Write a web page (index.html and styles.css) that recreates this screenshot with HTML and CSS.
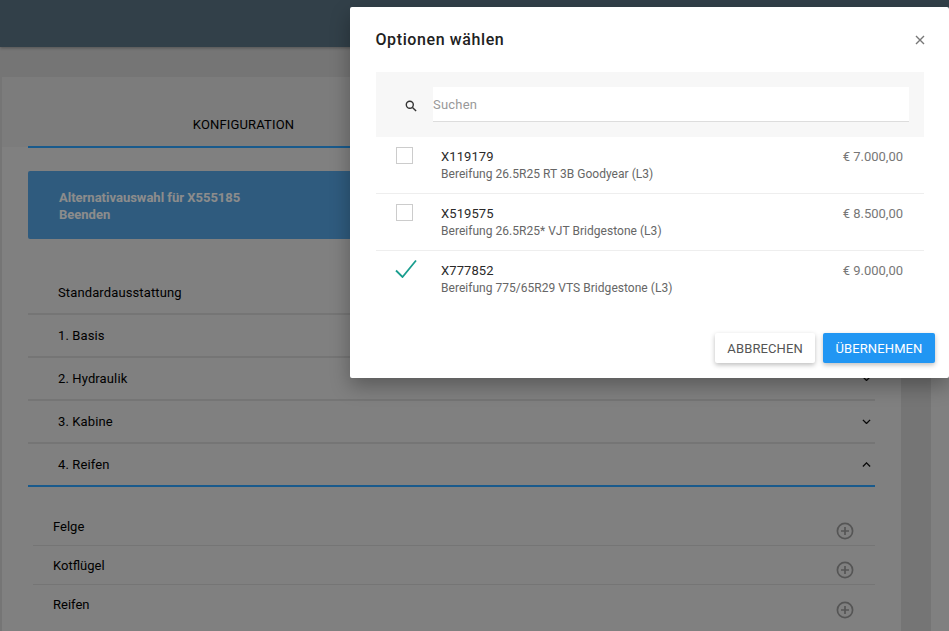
FILE: index.html
```html
<!DOCTYPE html>
<html>
  <head>
    <meta charset="utf-8">
    <title>Konfiguration</title>
    <link rel="stylesheet" href="styles.css">
  </head>
  <body>
    <div class="topbar"></div>
    <div class="content">
      <div class="card">
        <div class="tabs">
          <div class="tab">KONFIGURATION</div>
        </div>
        <div class="notice">
          <div>Alternativauswahl für X555185</div>
          <div>Beenden</div>
        </div>
        <div class="accordion">
          <div class="acc-row"><span>Standardausstattung</span></div>
          <div class="acc-row"><span>1. Basis</span></div>
          <div class="acc-row">
            <span>2. Hydraulik</span>
            <svg class="chevron" viewBox="0 0 10 6"><path d="M1 1l4 4 4-4"/></svg>
          </div>
          <div class="acc-row">
            <span>3. Kabine</span>
            <svg class="chevron" viewBox="0 0 10 6"><path d="M1 1l4 4 4-4"/></svg>
          </div>
          <div class="acc-row open">
            <span>4. Reifen</span>
            <svg class="chevron" viewBox="0 0 10 6"><path d="M1 5l4-4 4 4"/></svg>
          </div>
        </div>
        <div class="sublist">
          <div class="sub-row">
            <span>Felge</span>
            <svg class="plus" viewBox="0 0 18 18"><circle cx="9" cy="9" r="7.6"/><path d="M9 5v8M5 9h8"/></svg>
          </div>
          <div class="sub-row">
            <span>Kotflügel</span>
            <svg class="plus" viewBox="0 0 18 18"><circle cx="9" cy="9" r="7.6"/><path d="M9 5v8M5 9h8"/></svg>
          </div>
          <div class="sub-row last">
            <span>Reifen</span>
            <svg class="plus" viewBox="0 0 18 18"><circle cx="9" cy="9" r="7.6"/><path d="M9 5v8M5 9h8"/></svg>
          </div>
        </div>
      </div>
      <div class="gutter"></div>
      <div class="side"></div>
    </div>

    <div class="scrim"></div>

    <div class="dialog">
      <div class="dialog-head">
        <h2>Optionen wählen</h2>
        <svg class="close" viewBox="0 0 10 10"><path d="M1 1l8 8M9 1l-8 8"/></svg>
      </div>
      <div class="search">
        <svg class="search-icon" viewBox="0 0 12 12"><circle cx="4.8" cy="4.8" r="3.5"/><path d="M7.5 7.5l3.6 3.6"/></svg>
        <div class="search-input">Suchen</div>
      </div>
      <div class="option">
        <div class="check"><div class="box"></div></div>
        <div class="option-text">
          <div class="code">X119179</div>
          <div class="desc">Bereifung 26.5R25 RT 3B Goodyear (L3)</div>
        </div>
        <div class="price">€ 7.000,00</div>
      </div>
      <div class="option">
        <div class="check"><div class="box"></div></div>
        <div class="option-text">
          <div class="code">X519575</div>
          <div class="desc">Bereifung 26.5R25* VJT Bridgestone (L3)</div>
        </div>
        <div class="price">€ 8.500,00</div>
      </div>
      <div class="option last">
        <div class="check">
          <svg class="tick" viewBox="0 0 22 19"><path d="M1 11.5l6.5 6.5L21 1.5"/></svg>
        </div>
        <div class="option-text">
          <div class="code">X777852</div>
          <div class="desc">Bereifung 775/65R29 VTS Bridgestone (L3)</div>
        </div>
        <div class="price">€ 9.000,00</div>
      </div>
      <div class="dialog-foot">
        <button class="btn">ABBRECHEN</button>
        <button class="btn primary">ÜBERNEHMEN</button>
      </div>
    </div>
  </body>
</html>
```

FILE: styles.css
```css
html, body {
  margin: 0;
  height: 100%;
  overflow: hidden;
}
body {
  background-color: #d5d5d5;
  font-family: Roboto, "Liberation Sans", sans-serif;
  color: #000;
}
.topbar {
  height: 47px;
  background-color: #5b7686;
  box-shadow: 0 1px 3px rgba(0,0,0,.3);
}
.content {
  display: flex;
  padding: 30px 0 0 2px;
  height: 554px;
}
.card {
  width: 899px;
  flex: none;
  box-sizing: border-box;
  padding: 0 26px 0 26px;
  background-color: #e9e9e9;
}
.gutter {
  width: 30px;
  flex: none;
}
.side {
  flex: 1;
  background-color: #e9e9e9;
}
.tabs {
  display: flex;
  height: 70px;
  margin: 0 -26px;
  padding: 0 26px;
  background-color: #e2e2e2;
}
.tab {
  width: 431px;
  box-sizing: border-box;
  height: 71px;
  border-bottom: 2px solid #2fa4ff;
  text-align: center;
  font-size: 13px;
  letter-spacing: .15px;
  line-height: 95px;
}
.notice {
  margin-top: 24px;
  height: 68px;
  box-sizing: border-box;
  padding: 18px 31px;
  border-radius: 2px;
  background-color: #57a7e5;
  color: #fff;
  font-size: 13px;
  font-weight: 700;
  line-height: 17px;
}
.accordion {
  margin-top: 33px;
}
.acc-row {
  display: flex;
  align-items: center;
  justify-content: space-between;
  height: 43px;
  box-sizing: border-box;
  padding: 0 4.5px 0 30px;
  border-bottom: 2px solid #d6d6d6;
  font-size: 13px;
  letter-spacing: .12px;
}
.acc-row.open {
  border-bottom-color: #2fa4ff;
}
.chevron {
  width: 9px;
  height: 5.4px;
  fill: none;
  stroke: #111;
  stroke-width: 1.5;
}
.sublist {
  padding: 20px 0 0 5px;
}
.sub-row {
  display: flex;
  align-items: center;
  justify-content: space-between;
  height: 39px;
  box-sizing: border-box;
  padding: 0 21px 0 20px;
  border-bottom: 1px solid #d6d6d6;
  font-size: 13px;
}
.sub-row.last {
  border-bottom: none;
}
.plus {
  width: 18px;
  height: 18px;
  margin-top: 10px;
  fill: none;
  stroke: #9c9c9c;
  stroke-width: 1.7;
}
.scrim {
  position: absolute;
  top: 0;
  left: 0;
  right: 0;
  bottom: 0;
  background-color: rgba(0,0,0,.45);
}
.dialog {
  position: absolute;
  top: 7px;
  left: 350px;
  right: 0;
  height: 371px;
  border-radius: 2px;
  background-color: #fff;
  box-shadow: 0 8px 20px rgba(0,0,0,.3);
}
.dialog-head {
  display: flex;
  align-items: center;
  justify-content: space-between;
  height: 65px;
  padding: 0 24px 0 25.5px;
}
.dialog-head h2 {
  margin: 0;
  font-size: 16px;
  font-weight: 500;
  letter-spacing: .6px;
  color: #212121;
}
.close {
  width: 10px;
  height: 10px;
  fill: none;
  stroke: #777;
  stroke-width: 1.4;
}
.search {
  display: flex;
  align-items: center;
  height: 65px;
  margin: 0 25px 0 26px;
  padding-right: 15px;
  background-color: #f7f7f7;
}
.search-icon {
  width: 12px;
  height: 12px;
  margin: 3px 16px 0 29px;
  fill: none;
  stroke: #333;
  stroke-width: 1.4;
}
.search-input {
  flex: 1;
  height: 35px;
  box-sizing: border-box;
  border-bottom: 1px solid #ddd;
  background-color: #fff;
  font-size: 13px;
  letter-spacing: .2px;
  line-height: 35px;
  color: #999;
}
.option {
  display: flex;
  height: 57px;
  box-sizing: border-box;
  margin: 0 25px 0 26px;
  border-bottom: 1px solid #eee;
}
.option.last {
  border-bottom: none;
}
.check {
  width: 65px;
  flex: none;
  padding-top: 10px;
  box-sizing: border-box;
}
.box {
  width: 17px;
  height: 17px;
  box-sizing: border-box;
  margin-left: 20px;
  border: 1px solid #ccc;
}
.tick {
  display: block;
  width: 22px;
  height: 19px;
  margin: -2px 0 0 19px;
  fill: none;
  stroke: #1a9e8f;
  stroke-width: 1.8;
}
.option-text {
  flex: 1;
  padding-top: 11px;
}
.code {
  font-size: 13px;
  line-height: 17px;
  letter-spacing: .1px;
  color: #2a2a2a;
}
.desc {
  font-size: 12px;
  line-height: 18px;
  letter-spacing: .03px;
  color: #666;
}
.price {
  padding: 11px 21px 0 0;
  font-size: 13px;
  line-height: 17px;
  color: #777;
}
.dialog-foot {
  display: flex;
  justify-content: flex-end;
  gap: 8px;
  margin-top: 25px;
  padding-right: 14px;
}
.btn {
  height: 30px;
  padding: 0 12px;
  border: none;
  border-radius: 2px;
  background-color: #fff;
  box-shadow: 0 2px 5px rgba(0,0,0,.26);
  font-family: inherit;
  font-size: 13px;
  letter-spacing: .12px;
  color: #555;
}
.btn.primary {
  padding: 0 12.5px;
  background-color: #2196f3;
  color: #fff;
}
```
